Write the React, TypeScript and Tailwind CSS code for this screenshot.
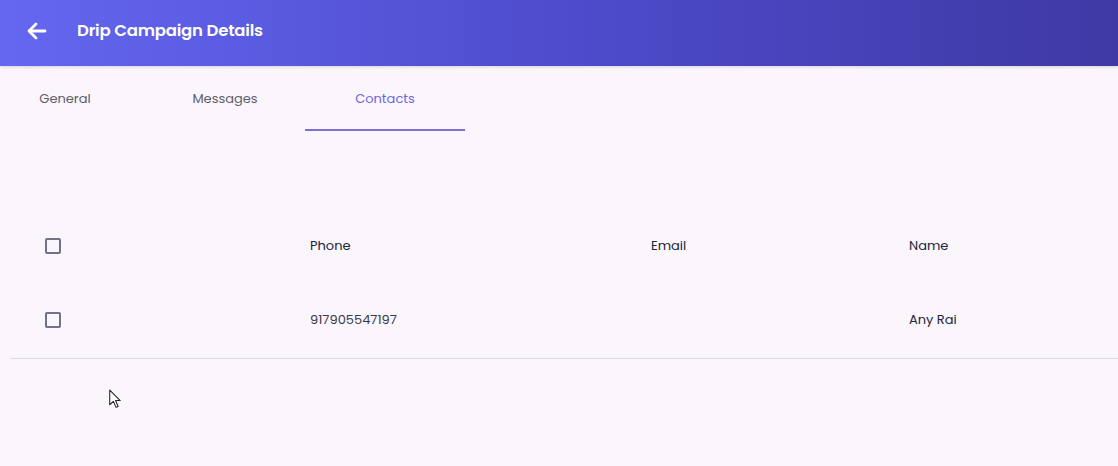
import React from "react";

function Checkbox() {
  return <div className="w-[16px] h-[16px] rounded-[2px] border-2 border-[#6f7289]" />;
}

export default function App() {
  const font = { fontFamily: '"Poppins", "Inter", "Noto Sans", sans-serif' };
  return (
    <div className="relative w-[1118px] h-[466px] bg-[#faf6fb] overflow-hidden" style={font}>
      <div className="h-[66px] pb-[4px] flex items-center bg-gradient-to-r from-[#6467f0] via-[#4f4ccd] to-[#3e39a4] shadow-[0_1px_3px_rgba(0,0,0,0.15)]">
        <div className="pl-[25px] w-[77px]">
          <svg width="24" height="24" viewBox="0 0 24 24" fill="none" stroke="white" strokeWidth="2.8" strokeLinecap="round" strokeLinejoin="round">
            <path d="M20 12H4.5" />
            <path d="M11 5l-7 7 7 7" />
          </svg>
        </div>
        <div className="text-white text-[16.5px] font-semibold tracking-[-0.2px]">Drip Campaign Details</div>
      </div>
      <div className="flex ml-[-15px] h-[65px]">
        {["General", "Messages", "Contacts"].map((t, i) => (
          <div key={t} className={`w-[160px] flex items-center justify-center text-[13px] pt-[3px] ${i === 2 ? "text-[#6b66dd] border-b-2 border-[#7b6fd6]" : "text-[#5d5d6b] border-b-2 border-transparent"}`}>
            {t}
          </div>
        ))}
      </div>
      <div className="mt-[78px] ml-[10px] mr-0">
        <div className="flex items-center h-[74px] text-[13px] text-[#23233a]">
          <div className="w-[300px] pl-[35px]"><Checkbox /></div>
          <div className="w-[341px]">Phone</div>
          <div className="w-[258px]">Email</div>
          <div>Name</div>
        </div>
        <div className="flex items-center h-[76px] pb-[2px] text-[13px] text-[#3a3a4c] border-b border-[#dcdbe0]">
          <div className="w-[300px] pl-[35px]"><Checkbox /></div>
          <div className="w-[341px]">917905547197</div>
          <div className="w-[258px]"></div>
          <div className="text-[#23233a]">Any Rai</div>
        </div>
      </div>
      <svg className="absolute left-[108px] top-[389px]" width="15" height="21" viewBox="0 0 13 20">
        <path d="M1 1 L1 15 L4.5 11.8 L7 17.5 L9 16.6 L6.6 11 L11 11 Z" fill="white" stroke="#222" strokeWidth="1" strokeLinejoin="round" />
      </svg>
    </div>
  );
}
